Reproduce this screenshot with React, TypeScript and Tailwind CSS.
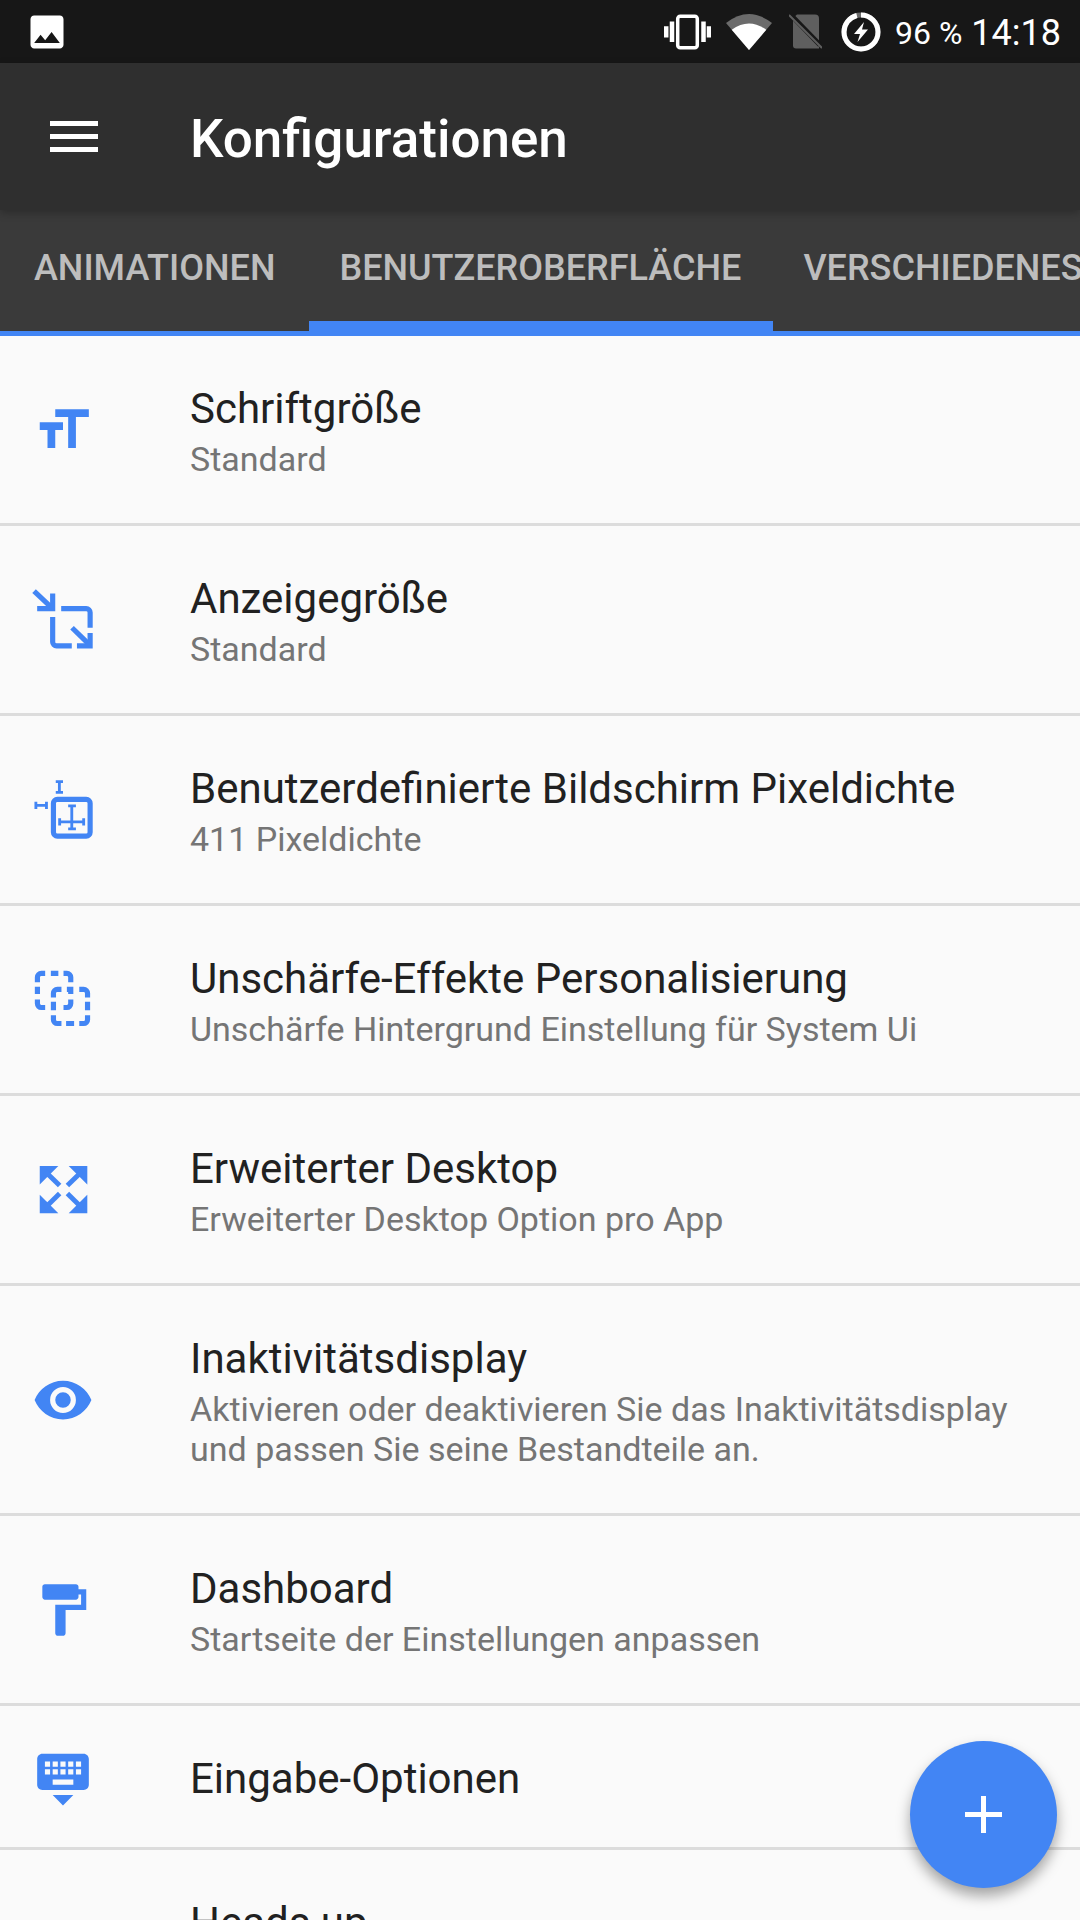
import React from 'react';

// Icons use the 24-unit material grid, drawn at 62px
const Icon: React.FC<{ children: React.ReactNode }> = ({ children }) => (
  <svg viewBox="0 0 24 24" className="w-[62px] h-[62px] shrink-0 ml-[32px] mr-[96px] text-[#4285f4]" fill="currentColor">
    {children}
  </svg>
);

const TextSizeIcon = () => (
  <Icon>
    <path d="M3 12h3v7h3v-7h3V9H3m6-5v3h5v12h3V7h5V4H9z" />
  </Icon>
);

const DisplaySizeIcon = () => (
  <Icon>
    <g fill="none" stroke="currentColor" strokeWidth="2">
      <path d="M0.8 0.8 L8 7.6" />
      <path d="M2 7.6 H8 V1.700" />
      <path d="M11.300 7.600 H21 a1.500 1.500 0 0 1 1.500 1.500 V15" />
      <path d="M8 10.800 V20.500 a1.500 1.500 0 0 0 1.500 1.500 H15.400" />
      <path d="M15.500 15 L22.500 21.800" />
      <path d="M17.400 22 H22.500 V17" />
    </g>
  </Icon>
);

const DensityIcon = () => (
  <Icon>
    <g fill="none" stroke="currentColor">
      <rect x="8.300" y="7.900" width="14.200" height="14.200" rx="1.500" strokeWidth="2" />
      <g strokeWidth="1.100">
        <path d="M9.200 1H12 M10.600 1V5.200 M9.200 5.200H12" />
        <path d="M1.500 8.800V11.600 M1.500 10.200H5.600 M5.600 8.800V11.600" />
        <path d="M10.700 15.200V18 M10.700 16.600H20 M20 15.200V18" />
        <path d="M14 10.400H17 M15.400 10.400V19.300 M14 19.300H17" />
      </g>
    </g>
  </Icon>
);

const BlurIcon = () => (
  <Icon>
    <g fill="none" stroke="currentColor" strokeWidth="2">
      {/* back square */}
      <path d="M2.100 5.100V3.200A1.500 1.500 0 0 1 3.600 1.700H5.100 M7.300 1.700H10.200 M12.200 1.700H13.500A1.500 1.500 0 0 1 15 3.200V5.100 M2.100 6.900V9.700 M2.100 11.800V13.400A1.500 1.500 0 0 0 3.600 14.900H5.100" />
      <path d="M15 6.900V9.700 M13.500 7.900H15 M15 11.800V13.400A1.500 1.500 0 0 1 13.500 14.900H12.200" />
      {/* front square */}
      <path d="M8.300 11V9.400A1.500 1.500 0 0 1 9.800 7.900H11.400 M18.300 7.900H20A1.500 1.500 0 0 1 21.500 9.400V11 M21.500 12.700V16 M21.500 17.900V19.600A1.500 1.500 0 0 1 20 21.100H18.300 M13.200 21.100H16.300 M11.400 21.100H9.800A1.500 1.500 0 0 1 8.300 19.600V17.900 M8.300 12.700V16" />
    </g>
  </Icon>
);

const ExpandIcon = () => (
  <Icon>
    <path d="M3 2.700h7.200L3 9.900z" />
    <path d="M21.400 2.700v7.200l-7.200-7.200z" />
    <path d="M3 21v-7.200l7.200 7.200z" />
    <path d="M21.400 21h-7.200l7.200-7.200z" />
    <g stroke="currentColor" strokeWidth="1.900" fill="none">
      <path d="M5 4.700 L10.700 10.300" />
      <path d="M19.400 4.700 L13.700 10.300" />
      <path d="M5 19 L10.700 13.400" />
      <path d="M19.400 19 L13.700 13.400" />
    </g>
  </Icon>
);

const EyeIcon = () => (
  <Icon>
    <path d="M12 9a3 3 0 0 0-3 3 3 3 0 0 0 3 3 3 3 0 0 0 3-3 3 3 0 0 0-3-3m0 8a5 5 0 0 1-5-5 5 5 0 0 1 5-5 5 5 0 0 1 5 5 5 5 0 0 1-5 5m0-12.500C7 4.500 2.730 7.610 1 12c1.730 4.390 6 7.500 11 7.500s9.270-3.110 11-7.500c-1.730-4.390-6-7.500-11-7.500z" />
  </Icon>
);

const PaintIcon = () => (
  <Icon>
    <path d="M18 4V3c0-.55-.45-1-1-1H5c-.55 0-1 .45-1 1v4c0 .55.45 1 1 1h12c.55 0 1-.45 1-1V6h1v4H9v11c0 .55.45 1 1 1h2c.55 0 1-.45 1-1v-9h8V4h-3z" />
  </Icon>
);

const KeyboardIcon = () => (
  <Icon>
    <path d="M20 3H4c-1.100 0-1.990.9-1.990 2L2 15c0 1.100.9 2 2 2h16c1.100 0 2-.9 2-2V5c0-1.100-.9-2-2-2zm-9 3h2v2h-2V6zm0 3h2v2h-2V9zM8 6h2v2H8V6zm0 3h2v2H8V9zm-1 2H5V9h2v2zm0-3H5V6h2v2zm9 7H8v-2h8v2zm0-4h-2V9h2v2zm0-3h-2V6h2v2zm3 3h-2V9h2v2zm0-3h-2V6h2v2zm-7 15l4-4H8l4 4z" />
  </Icon>
);

const items: { icon: React.ReactNode; title: string; sub?: string[] }[] = [
  { icon: <TextSizeIcon />, title: 'Schriftgröße', sub: ['Standard'] },
  { icon: <DisplaySizeIcon />, title: 'Anzeigegröße', sub: ['Standard'] },
  { icon: <DensityIcon />, title: 'Benutzerdefinierte Bildschirm Pixeldichte', sub: ['411 Pixeldichte'] },
  { icon: <BlurIcon />, title: 'Unschärfe-Effekte Personalisierung', sub: ['Unschärfe Hintergrund Einstellung für System Ui'] },
  { icon: <ExpandIcon />, title: 'Erweiterter Desktop', sub: ['Erweiterter Desktop Option pro App'] },
  {
    icon: <EyeIcon />,
    title: 'Inaktivitätsdisplay',
    sub: ['Aktivieren oder deaktivieren Sie das Inaktivitätsdisplay', 'und passen Sie seine Bestandteile an.'],
  },
  { icon: <PaintIcon />, title: 'Dashboard', sub: ['Startseite der Einstellungen anpassen'] },
  { icon: <KeyboardIcon />, title: 'Eingabe-Optionen' },
];

const StatusBar = () => (
  <div className="h-[63px] bg-[#171717] flex items-center text-white shrink-0">
    <svg viewBox="0 0 24 24" className="w-[44px] h-[44px] ml-[25px]" fill="currentColor">
      <path d="M21 19V5c0-1.100-.9-2-2-2H5c-1.100 0-2 .9-2 2v14c0 1.100.9 2 2 2h14c1.100 0 2-.9 2-2zM8.500 13.500l2.500 3.010L14.500 12l4.500 6H5l3.500-4.500z" />
    </svg>
    <div className="flex-1" />
    {/* vibrate */}
    <svg viewBox="0 0 47 36" className="w-[47px] h-[36px] mr-[15px]" fill="none" stroke="currentColor">
      <rect x="13.700" y="2.250" width="19.600" height="31.500" rx="2.500" strokeWidth="3.500" />
      <path d="M2.200 12.200V23.500 M8 7.500V28 M39.500 7.500V28 M45 12.200V23.500" strokeWidth="4.500" />
    </svg>
    {/* wifi */}
    <svg viewBox="0 0 46 36" className="w-[46px] h-[36px] mr-[17px]">
      <path d="M0 9Q23 -9 46 9L23 36Z" fill="#6b6b6b" />
      <path d="M5.700 15.800Q23 3.200 40.300 15.800L23 36Z" fill="#ffffff" />
    </svg>
    {/* sim off */}
    <svg viewBox="0 0 33 36" className="w-[33px] h-[36px] mr-[19px]">
      <path d="M8 0.500H26a4 4 0 0 1 4 4V34.500H7a3 3 0 0 1-3-3V4Z" fill="#5f5f5f" />
      <path d="M-1 -2L31 31" stroke="#171717" strokeWidth="5" />
      <path d="M0 1L33 34" stroke="#5f5f5f" strokeWidth="2" />
    </svg>
    {/* battery */}
    <svg viewBox="0 0 40 40" className="w-[40px] h-[40px] mr-[14px]">
      <circle cx="20" cy="20" r="17" fill="none" stroke="#6b6b6b" strokeWidth="5" />
      <circle
        cx="20"
        cy="20"
        r="17"
        fill="none"
        stroke="#ffffff"
        strokeWidth="5"
        pathLength="100"
        strokeDasharray="96 4"
        transform="rotate(-90 20 20)"
      />
      <path d="M23 10L13 22H19L16.500 30L27 17.500H21Z" fill="#ffffff" />
    </svg>
    <span className="text-[32px] leading-none mr-[9px] pt-[2px]">96 %</span>
    <span className="text-[36px] leading-none mr-[19px] pt-[2px]">14:18</span>
  </div>
);

const tabs = [
  { label: 'ANIMATIONEN', pad: 'px-[34px]' },
  { label: 'BENUTZEROBERFLÄCHE', pad: 'pl-[30px] pr-[32px]' },
  { label: 'VERSCHIEDENES', pad: 'pl-[30px] pr-[32px]' },
];

export default function App() {
  return (
    <div
      className="relative w-[1080px] h-[1920px] overflow-hidden bg-[#fafafa] flex flex-col"
      style={{ fontFamily: 'Roboto, sans-serif' }}
    >
      <StatusBar />

      {/* Toolbar */}
      <div className="relative z-10 h-[147px] shrink-0 bg-[#2f2f2f] flex items-center shadow-[0_3px_8px_rgba(0,0,0,0.25)]">
        <div className="ml-[50px] w-[48px] flex flex-col gap-[8px]">
          <div className="h-[5px] bg-white" />
          <div className="h-[5px] bg-white" />
          <div className="h-[5px] bg-white" />
        </div>
        <span className="ml-[92px] pt-[7px] text-[53px] font-medium text-white">Konfigurationen</span>
      </div>

      {/* Tabs */}
      <div className="h-[126px] shrink-0 bg-[#3a3a3a] border-b-[5px] border-[#4285f4] flex whitespace-nowrap overflow-hidden">
        {tabs.map((t, i) => (
          <div key={t.label} className={`relative h-full shrink-0 flex items-center pb-[6px] ${t.pad}`}>
            <span className="text-[36px] font-medium text-[#bdbdbd]">{t.label}</span>
            {i === 1 && <div className="absolute left-0 right-0 bottom-0 h-[10px] bg-[#4285f4]" />}
          </div>
        ))}
      </div>

      {/* List */}
      <div className="flex flex-col shrink-0">
        {items.map((it) => (
          <div
            key={it.title}
            className={`flex items-center border-b-[3px] border-[#dcdcdc] ${it.sub ? 'py-[44px]' : 'h-[144px]'}`}
          >
            {it.icon}
            <div className={`flex flex-col ${it.sub ? 'pt-[3px]' : 'pt-[4px]'}`}>
              <div className="text-[42px] leading-[52px] text-[#212121]">{it.title}</div>
              {it.sub && (
                <div className="mt-[4px] text-[34px] leading-[40px] text-[#757575]">
                  {it.sub.map((s) => (
                    <div key={s}>{s}</div>
                  ))}
                </div>
              )}
            </div>
          </div>
        ))}
        <div className="pl-[190px] pt-[47px] text-[42px] leading-[52px] text-[#212121]">Heads up</div>
      </div>

      {/* FAB */}
      <div className="absolute left-[910px] top-[1741px] w-[147px] h-[147px] rounded-full bg-[#4285f4] shadow-[0_8px_14px_rgba(0,0,0,0.35)] flex items-center justify-center">
        <svg viewBox="0 0 37 37" className="w-[37px] h-[37px]" fill="none" stroke="#ffffff" strokeWidth="5">
          <path d="M18.500 0V37 M0 18.500H37" />
        </svg>
      </div>
    </div>
  );
}
